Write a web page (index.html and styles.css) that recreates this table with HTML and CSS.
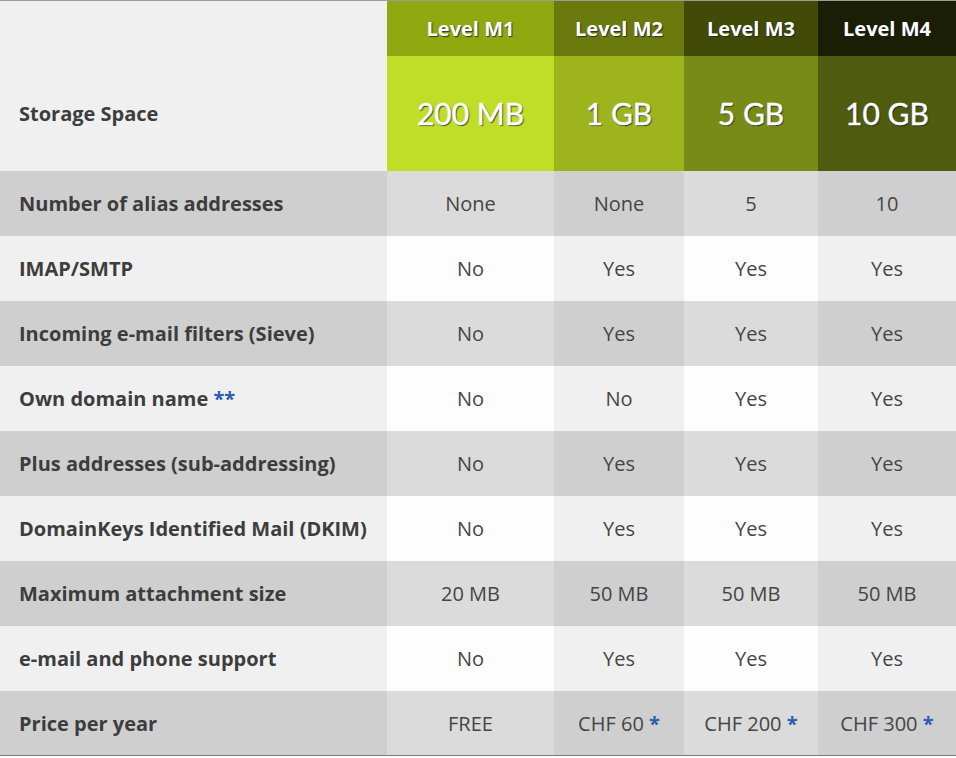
FILE: index.html
```html
<!DOCTYPE html>
<html>
<head>
<meta charset="utf-8">
<link rel="stylesheet" href="styles.css">
</head>
<body>
<table class="plans">
  <colgroup>
    <col class="c-label"><col class="c-m1"><col class="c-m2"><col class="c-m3"><col class="c-m4">
  </colgroup>
  <thead>
    <tr class="level-row">
      <th class="label"></th>
      <th class="lv lv1">Level M1</th>
      <th class="lv lv2">Level M2</th>
      <th class="lv lv3">Level M3</th>
      <th class="lv lv4">Level M4</th>
    </tr>
    <tr class="size-row">
      <th class="label">Storage Space</th>
      <th class="sz sz1">200 MB</th>
      <th class="sz sz2">1 GB</th>
      <th class="sz sz3">5 GB</th>
      <th class="sz sz4">10 GB</th>
    </tr>
  </thead>
  <tbody>
    <tr class="dark"><th class="label">Number of alias addresses</th><td>None</td><td>None</td><td>5</td><td>10</td></tr>
    <tr class="light"><th class="label">IMAP/SMTP</th><td>No</td><td>Yes</td><td>Yes</td><td>Yes</td></tr>
    <tr class="dark"><th class="label">Incoming e-mail filters (Sieve)</th><td>No</td><td>Yes</td><td>Yes</td><td>Yes</td></tr>
    <tr class="light"><th class="label">Own domain name <span class="star">**</span></th><td>No</td><td>No</td><td>Yes</td><td>Yes</td></tr>
    <tr class="dark"><th class="label">Plus addresses (sub-addressing)</th><td>No</td><td>Yes</td><td>Yes</td><td>Yes</td></tr>
    <tr class="light"><th class="label">DomainKeys Identified Mail (DKIM)</th><td>No</td><td>Yes</td><td>Yes</td><td>Yes</td></tr>
    <tr class="dark"><th class="label">Maximum attachment size</th><td>20 MB</td><td>50 MB</td><td>50 MB</td><td>50 MB</td></tr>
    <tr class="light"><th class="label">e-mail and phone support</th><td>No</td><td>Yes</td><td>Yes</td><td>Yes</td></tr>
    <tr class="dark"><th class="label">Price per year</th><td>FREE</td><td>CHF 60 <span class="star">*</span></td><td>CHF 200 <span class="star">*</span></td><td>CHF 300 <span class="star">*</span></td></tr>
  </tbody>
</table>
</body>
</html>
```
FILE: styles.css
```css
html, body {
  margin: 0;
  padding: 0;
  background: #ffffff;
}
.plans {
  width: 956px;
  border-collapse: collapse;
  table-layout: fixed;
  border-top: 1px solid #9c9c9c;
  border-bottom: 1px solid #7a7a7a;
  font-family: "Open Sans", "Noto Sans", sans-serif;
  font-size: 20px;
  color: #454545;
}
.c-label { width: 387px; }
.c-m1 { width: 167px; }
.c-m2 { width: 130px; }
.c-m3 { width: 134px; }
.c-m4 { width: 138px; }
.plans th, .plans td {
  padding: 0;
  text-align: center;
  vertical-align: middle;
}
.plans td {
  padding-top: 1px;
}
.plans .label {
  text-align: left;
  padding-left: 19px;
  padding-top: 1px;
  font-weight: 700;
  color: #3d3d3d;
  background: #f0f0f0;
}
.level-row { height: 55px; }
.size-row { height: 115px; }
tbody tr { height: 65px; }
.lv {
  color: #ffffff;
  font-weight: 700;
  font-size: 20px;
  text-shadow: 1px 1px 1px rgba(20, 30, 40, 0.8);
}
.lv1 { background: #8fa80f; }
.lv2 { background: #6a7a0c; }
.lv3 { background: #414b07; }
.lv4 { background: #1a1e04; }
.sz {
  color: #ffffff;
  font-family: "Lato", "Open Sans", sans-serif;
  font-weight: 400;
  font-size: 30px;
  padding-bottom: 14px;
  -webkit-text-stroke: 0.4px #ffffff;
  text-shadow: 1px 1px 1px rgba(20, 40, 50, 0.9);
}
.sz1 { background: #c0de27; }
.sz2 { background: #9db41d; }
.sz3 { background: #788b17; }
.sz4 { background: #4f5b0e; }
tr.dark .label { background: #cfcfcf; }
tr.dark td:nth-child(odd) { background: #cfcfcf; }
tr.dark td:nth-child(even) { background: #dbdbdb; }
tr.light td:nth-child(odd) { background: #f0f0f0; }
tr.light td:nth-child(even) { background: #fdfdfd; }
.star {
  color: #2a5db0;
  font-weight: 700;
}
```
